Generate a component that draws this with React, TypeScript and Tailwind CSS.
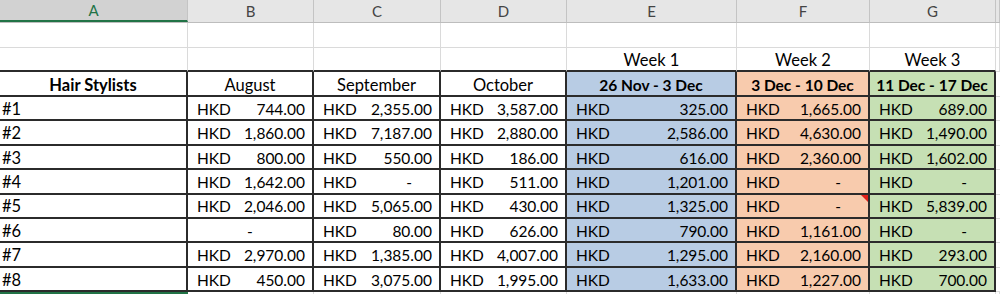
import React from 'react';

type Amount = number | null | 'blank';

interface Stylist {
  name: string;
  aug: Amount;
  sep: Amount;
  oct: Amount;
  w1: Amount;
  w2: Amount;
  w3: Amount;
}

const stylists: Stylist[] = [
  { name: '#1', aug: 744, sep: 2355, oct: 3587, w1: 325, w2: 1665, w3: 689 },
  { name: '#2', aug: 1860, sep: 7187, oct: 2880, w1: 2586, w2: 4630, w3: 1490 },
  { name: '#3', aug: 800, sep: 550, oct: 186, w1: 616, w2: 2360, w3: 1602 },
  { name: '#4', aug: 1642, sep: null, oct: 511, w1: 1201, w2: null, w3: null },
  { name: '#5', aug: 2046, sep: 5065, oct: 430, w1: 1325, w2: null, w3: 5839 },
  { name: '#6', aug: 'blank', sep: 80, oct: 626, w1: 790, w2: 1161, w3: null },
  { name: '#7', aug: 2970, sep: 1385, oct: 4007, w1: 1295, w2: 2160, w3: 293 },
  { name: '#8', aug: 450, sep: 3075, oct: 1995, w1: 1633, w2: 1227, w3: 700 },
];

const cols = 'grid grid-cols-[188px_126px_127px_126px_170px_133px_126px_1fr]';

const fmt = (n: number) =>
  n.toLocaleString('en-US', { minimumFractionDigits: 2, maximumFractionDigits: 2 });

const Money = ({ value, fill = '', flag = false }: { value: Amount; fill?: string; flag?: boolean }) => (
  <div className={`relative flex items-end justify-between border-r-2 border-b-2 border-[#2b2b2b] pb-[2px] text-[15.5px] ${fill}`}>
    {value === 'blank' ? (
      <span className="w-full text-center">-</span>
    ) : (
      <>
        <span className="pl-[9px]">HKD</span>
        {value === null ? <span className="pr-[27px]">-</span> : <span className="pr-[7px]">{fmt(value)}</span>}
      </>
    )}
    {flag && (
      <span className="absolute top-0 right-0 h-0 w-0 border-l-[7px] border-t-[7px] border-l-transparent border-t-[#e0201b]" />
    )}
  </div>
);

const colLetters = ['A', 'B', 'C', 'D', 'E', 'F', 'G', ''];

export default function App() {
  return (
    <div className="h-[294px] w-[1000px] overflow-hidden bg-white text-[16.5px] leading-none text-black" style={{ fontFamily: 'Lato, "Open Sans", sans-serif' }}>
      {/* Column letters */}
      <div className={`${cols} h-[23px] border-b border-[#bdbdbd] bg-[#e6e6e6] text-[15px] text-[#444]`}>
        {colLetters.map((c, i) => (
          <div
            key={i}
            className={`flex items-center justify-center border-r border-[#c4c4c4] ${
              i === 0 ? 'border-b-2 border-b-[#217346] bg-[#d2d2d2] text-[#217346]' : ''
            }`}
          >
            {c}
          </div>
        ))}
      </div>

      {/* Empty row */}
      <div className={`${cols} h-[25px]`}>
        {colLetters.map((_, i) => (
          <div key={i} className="border-r border-b border-[#dadada]" />
        ))}
      </div>

      {/* Week labels */}
      <div className={`${cols} h-[24px]`}>
        {['', '', '', '', 'Week 1', 'Week 2', 'Week 3', ''].map((w, i) => (
          <div key={i} className={`flex items-end justify-center pb-[2px] border-r border-[#dadada] ${i < 7 ? 'border-b-2 border-b-[#2b2b2b]' : 'border-b border-b-[#dadada]'}`}>
            {w}
          </div>
        ))}
      </div>

      {/* Header row */}
      <div className={`${cols} h-[25px]`}>
        <div className="flex items-end justify-center pb-[2px] border-r-2 border-b-2 border-[#2b2b2b] font-bold">Hair Stylists</div>
        <div className="flex items-end justify-center pb-[2px] border-r-2 border-b-2 border-[#2b2b2b]">August</div>
        <div className="flex items-end justify-center pb-[2px] border-r-2 border-b-2 border-[#2b2b2b]">September</div>
        <div className="flex items-end justify-center pb-[2px] border-r-2 border-b-2 border-[#2b2b2b]">October</div>
        <div className="flex items-end justify-center pb-[2px] border-r-2 border-b-2 border-[#2b2b2b] bg-[#b8cce4] text-[15.5px] font-bold">26 Nov - 3 Dec</div>
        <div className="flex items-end justify-center pb-[2px] border-r-2 border-b-2 border-[#2b2b2b] bg-[#f8cbad] text-[15.5px] font-bold">3 Dec - 10 Dec</div>
        <div className="flex items-end justify-center pb-[2px] border-r-2 border-b-2 border-[#2b2b2b] bg-[#c6e0b4] text-[15.5px] font-bold">11 Dec - 17 Dec</div>
        <div className="border-b border-[#dadada]" />
      </div>

      {/* Data rows */}
      {stylists.map((s) => (
        <div key={s.name} className={`${cols} h-[24.4px]`}>
          <div className="flex items-end pl-[2px] pb-[2px] border-r-2 border-b-2 border-[#2b2b2b]">{s.name}</div>
          <Money value={s.aug} />
          <Money value={s.sep} />
          <Money value={s.oct} />
          <Money value={s.w1} fill="bg-[#b8cce4]" />
          <Money value={s.w2} fill="bg-[#f8cbad]" flag={s.name === '#5'} />
          <Money value={s.w3} fill="bg-[#c6e0b4]" />
          <div className="border-b border-[#dadada]" />
        </div>
      ))}

      {/* Next row, partially visible, with the active cell in A */}
      <div className={`${cols} h-[10px]`}>
        <div className="border-t-2 border-r-2 border-[#217346]" />
        {colLetters.slice(1).map((_, i) => (
          <div key={i} className="border-r border-[#dadada]" />
        ))}
      </div>
    </div>
  );
}
